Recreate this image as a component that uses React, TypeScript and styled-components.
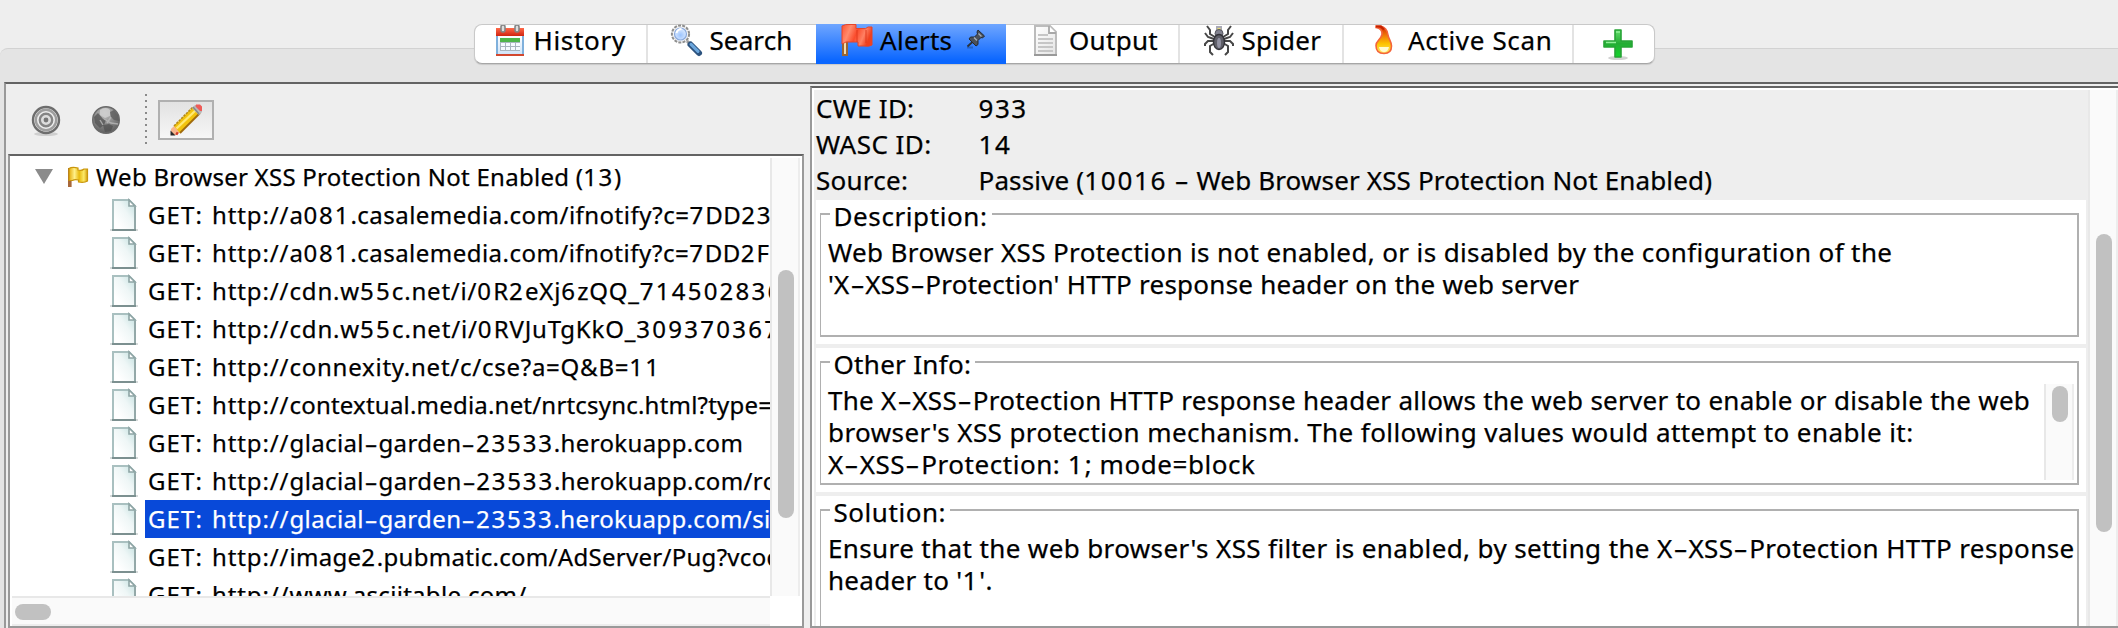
import React from "react";
import styled, { createGlobalStyle } from "styled-components";

const GlobalStyle = createGlobalStyle`
  *, *::before, *::after { box-sizing: border-box; }
  html, body { margin: 0; padding: 0; }
  body {
    background: #eeeeee;
    color: #000;
    font-family: "Noto Sans", "Open Sans", sans-serif;
    -webkit-text-stroke: 0.25px currentColor;
    overflow: hidden;
  }
`;

/* ---------- text ---------- */

const Run = styled.span<{ $track?: number }>`
  letter-spacing: ${(p) => p.$track ?? 0}px;
  white-space: pre;
`;

const Digits = styled.span<{ $track: number }>`
  letter-spacing: calc(${(p) => p.$track}px + 0.06em);
`;

const Hyphen = styled.span`
  display: inline-block;
  padding: 0 0.135em;
  transform: scaleX(1.7);
`;

/* Digits and hyphens are set wider than the surrounding letters. */
function Label({ text, track = 0 }: { text: string; track?: number }) {
  return (
    <Run $track={track}>
      {text.split(/(\d+|-)/).map((part, i) => {
        if (part === "-") return <Hyphen key={i}>-</Hyphen>;
        if (/^\d+$/.test(part)) return <Digits key={i} $track={track}>{part}</Digits>;
        return part;
      })}
    </Run>
  );
}

/* ---------- icons ---------- */

const Icon = styled.svg<{ $w?: number; $h?: number }>`
  display: block;
  flex: none;
  width: ${(p) => p.$w ?? 32}px;
  height: ${(p) => p.$h ?? 32}px;
  overflow: visible;
`;

const CalendarIcon = () => (
  <Icon viewBox="0 0 32 32">
    <defs>
      <linearGradient id="calBody" x1="0" y1="0" x2="0" y2="1">
        <stop offset="0" stopColor="#ffffff" />
        <stop offset="1" stopColor="#cfe3f8" />
      </linearGradient>
      <linearGradient id="calTop" x1="0" y1="0" x2="0" y2="1">
        <stop offset="0" stopColor="#ff6a4a" />
        <stop offset="1" stopColor="#cf2410" />
      </linearGradient>
    </defs>
    <rect x="3" y="11" width="26" height="20" fill="url(#calBody)" stroke="#7fb0dc" strokeWidth="2" />
    <rect x="2" y="30" width="28" height="2" fill="#d2482f" />
    <rect x="2" y="4" width="28" height="8" fill="url(#calTop)" />
    <rect x="6" y="14" width="20" height="4" fill="#4fb64a" />
    <rect x="6" y="18" width="20" height="9" fill="#a9b6bf" />
    {[7, 12, 17, 22].map((x) => (
      <g key={x} fill="#f6fbff">
        <rect x={x} y="19" width="4" height="3" />
        <rect x={x} y="23" width="4" height="3" />
      </g>
    ))}
    <g fill="#ddd" stroke="#858585" strokeWidth="1.6">
      <rect x="7" y="1" width="4" height="7" rx="2" />
      <rect x="21" y="1" width="4" height="7" rx="2" />
    </g>
  </Icon>
);

const SearchIcon = () => (
  <Icon viewBox="0 0 32 32">
    <defs>
      <radialGradient id="lens" cx="0.5" cy="0.6" r="0.6">
        <stop offset="0" stopColor="#9cc4ff" />
        <stop offset="1" stopColor="#e2eeff" />
      </radialGradient>
    </defs>
    <path d="M17 17l4 4" stroke="#9a9a9a" strokeWidth="3" />
    <path d="M20.5 20.5l8.5 8.5" stroke="#2c537f" strokeWidth="6" strokeLinecap="round" />
    <path d="M21 20.4l7 7" stroke="#6ba6dd" strokeWidth="3" strokeLinecap="round" />
    <circle cx="10.5" cy="10" r="8.6" fill="#f4f4f4" stroke="#8f8f8f" strokeWidth="2" strokeDasharray="3 1.2" />
    <circle cx="10.5" cy="10" r="6" fill="url(#lens)" stroke="#8aa9dd" strokeWidth="1.2" />
    <path d="M6.5 9q1-4 5-4" stroke="#fff" strokeWidth="2" fill="none" />
  </Icon>
);

const FlagIcon = () => (
  <Icon viewBox="0 0 32 32">
    <defs>
      <linearGradient id="redFlag" x1="0" y1="0" x2="1" y2="0.3">
        <stop offset="0" stopColor="#ff5230" />
        <stop offset="0.3" stopColor="#ff8b6e" />
        <stop offset="0.55" stopColor="#fb4b2b" />
        <stop offset="0.8" stopColor="#ff8164" />
        <stop offset="1" stopColor="#f0401f" />
      </linearGradient>
    </defs>
    <rect x="4" y="2" width="6" height="30" fill="#996633" />
    <rect x="6" y="14" width="2" height="16" fill="#f3dcae" />
    <path d="M4 2q3-2 8-1.500h6v4h6q4 1 6-1.500h4v18q-3 2-8 1h-6v-4h-8q-4-1-8 2z" fill="url(#redFlag)" stroke="#e5452a" strokeWidth="1" />
    <path d="M19 6v12M28 6v13" stroke="#e03a1e" strokeWidth="1.6" opacity=".6" />
  </Icon>
);

const PinIcon = () => (
  <Icon viewBox="0 0 20 20" $w={20} $h={20}>
    <path d="M1 18.500h6" stroke="#1c4f9e" strokeWidth="2" opacity=".55" />
    <path d="M1.500 17.500l6-5.500" stroke="#2b3138" strokeWidth="1.8" />
    <path d="M12 1l6.500 6-2 2-1.500-.5-3 3v4l-2 1.500-7-7 1.500-2h4l3-3-.5-2z" fill="#4b5159" stroke="#252a31" strokeWidth="1" />
    <path d="M12.500 4.500l3 3M8 8.500l3 3" stroke="#a6adb5" strokeWidth="1.4" />
  </Icon>
);

const OutputIcon = () => (
  <Icon viewBox="0 0 32 32">
    <defs>
      <linearGradient id="pageGrey" x1="0" y1="0" x2="1" y2="1">
        <stop offset="0" stopColor="#ffffff" />
        <stop offset="1" stopColor="#e4e4e4" />
      </linearGradient>
    </defs>
    <path d="M7 2h15l6 6v23H7z" fill="url(#pageGrey)" stroke="#bcbcbc" strokeWidth="2" />
    <path d="M21 2v7h7" fill="#fff" stroke="#a8a8a8" strokeWidth="1.8" />
    <path d="M10 11h10M10 15h15M10 19h15M10 23h15M10 27h15" stroke="#c6c6c6" strokeWidth="1.8" />
    <path d="M6 31h23" stroke="#999" strokeWidth="2" />
  </Icon>
);

const SpiderIcon = () => (
  <Icon viewBox="0 0 32 32">
    <g fill="none" stroke="#474747" strokeWidth="2">
      <path d="M13 13L8 10V6L5 2M12 15L6 13L3 9M12 17H6L3 20V22M13 19L8 22V28L11 31" />
      <path d="M21 13L26 10V6L29 2M22 15L28 13L31 9M22 17H28L31 20V22M21 19L26 22V28L23 31" />
    </g>
    <path d="M14 2h6v4h-6z" fill="#a9a9b5" />
    <rect x="15.500" y="4" width="3" height="3" fill="#e8dd76" />
    <ellipse cx="17" cy="9.500" rx="4" ry="4" fill="#82828f" stroke="#55555c" strokeWidth="1" />
    <ellipse cx="17" cy="18" rx="5.500" ry="7.500" fill="#5f5f68" stroke="#333338" strokeWidth="1.4" />
    <ellipse cx="17" cy="19" rx="2" ry="5" fill="#9292a2" />
  </Icon>
);

const FlameIcon = () => (
  <Icon viewBox="0 0 32 32">
    <defs>
      <linearGradient id="flame" x1="0" y1="0" x2="0" y2="1">
        <stop offset="0" stopColor="#d32300" />
        <stop offset="0.35" stopColor="#f07b08" />
        <stop offset="0.65" stopColor="#fdc400" />
        <stop offset="1" stopColor="#ffe96a" />
      </linearGradient>
    </defs>
    <path d="M10 2h4.500c5 1 7 5 7.500 9c.5 4 3.500 6 3.500 11c0 5-3 7.500-7.500 7.500s-8-2.500-8-8c0-5 5-6 6-11c.4-4-2-6.500-6-7z" fill="url(#flame)" stroke="#f4633a" strokeWidth="1.6" />
    <path d="M13 23h10q-1 5-5 5t-5-5z" fill="#fffbd0" />
    <path d="M10 2.500h5l3 3" fill="none" stroke="#c52200" strokeWidth="2" />
  </Icon>
);

const PlusIcon = () => (
  <Icon viewBox="0 0 32 32">
    <defs>
      <linearGradient id="plus" x1="0" y1="0" x2="0" y2="1">
        <stop offset="0" stopColor="#63dd6a" />
        <stop offset="0.5" stopColor="#24ac34" />
        <stop offset="1" stopColor="#12d52b" />
      </linearGradient>
    </defs>
    <ellipse cx="16" cy="30" rx="10" ry="2" fill="#d2d2d2" />
    <path d="M13 2h6v11h11v6H19v10h-6V19H2v-6h11z" fill="url(#plus)" stroke="#27a436" strokeWidth="1.6" strokeLinejoin="round" />
    <path d="M14 4h4M4 14.500h10" stroke="#8ff096" strokeWidth="1.4" />
  </Icon>
);

const TargetIcon = () => (
  <Icon viewBox="0 0 32 32">
    <ellipse cx="16" cy="30" rx="12" ry="2" fill="#cfcfcf" />
    <circle cx="16" cy="16" r="13" fill="#ededed" stroke="#6d6d6d" strokeWidth="2.400" />
    <circle cx="16" cy="16" r="10.200" fill="none" stroke="#9e9e9e" strokeWidth="2.400" />
    <circle cx="16" cy="16" r="6.200" fill="#ddd" stroke="#858585" strokeWidth="2.400" />
    <circle cx="16" cy="16" r="2.400" fill="#777" />
  </Icon>
);

const GlobeIcon = () => (
  <Icon viewBox="0 0 32 32">
    <defs>
      <radialGradient id="globe" cx="0.45" cy="0.25" r="0.8">
        <stop offset="0" stopColor="#c4c4c4" />
        <stop offset="0.5" stopColor="#8a8a8a" />
        <stop offset="1" stopColor="#585858" />
      </radialGradient>
    </defs>
    <circle cx="16" cy="16" r="13.300" fill="url(#globe)" stroke="#6a6a6a" strokeWidth="1.400" />
    <path d="M4 13l4-4 5 6 3 1-2 5-4 3-5-5z" fill="#565656" opacity=".8" />
    <path d="M20 8l4-2 4 5 1 6-5-1-3-3z" fill="#595959" opacity=".75" />
    <path d="M13 21l6-1 4 2-2 5-6 1z" fill="#4f4f4f" opacity=".7" />
    <path d="M10 6q6-4 10 0l0 6-5 2-5-3z" fill="#cfcfcf" opacity=".85" />
    <path d="M14 15l7 4 7 1M10 16l3 5M21 13l-4 6" stroke="#b9b9b9" strokeWidth="1.400" fill="none" opacity=".8" />
  </Icon>
);

const PencilIcon = () => (
  <Icon viewBox="0 0 32 32">
    <path d="M1 31V25L5 21L11 27L7 31Z" fill="#f6b58d" />
    <path d="M0.500 31.500v-5l5 5z" fill="#2a2a2a" />
    <path d="M4 22L23 3l7 6L10 29z" fill="#f2c30d" />
    <path d="M4 22L23 3" stroke="#b48b1b" strokeWidth="1.600" strokeDasharray="2.400 1" />
    <path d="M6.500 24.500L26 6" stroke="#ffe974" strokeWidth="2.400" />
    <path d="M10 29L30 9" stroke="#a06a0c" strokeWidth="1.800" />
    <path d="M22 4l3-3h3l4 4v3l-3 3z" fill="#b9b9b9" />
    <path d="M26 0.500h4l2 2V7l-2 0-4.500-4.500z" fill="#ee5b57" />
    <path d="M23 3l6 7" stroke="#888" strokeWidth="1.500" />
    <path d="M6 29l2 1" stroke="#cf3c2c" strokeWidth="3" />
  </Icon>
);

const YellowFlagIcon = () => (
  <Icon viewBox="0 0 20 20" $w={20} $h={20}>
    <defs>
      <linearGradient id="yellowFlag" x1="0" y1="0" x2="1" y2="0">
        <stop offset="0" stopColor="#e5ac0a" />
        <stop offset="0.3" stopColor="#fff08a" />
        <stop offset="0.55" stopColor="#e8b90c" />
        <stop offset="0.8" stopColor="#fdea68" />
        <stop offset="1" stopColor="#d49d08" />
      </linearGradient>
    </defs>
    <rect x="0" y="1" width="3.600" height="19" fill="#a8683a" />
    <path d="M1 1.500q3-2 9-.5v2q4 1 6-1h3.500v12q-3 2-9 1v-2q-4-1-6 .5H1z" fill="url(#yellowFlag)" stroke="#c9960c" strokeWidth="1.200" />
  </Icon>
);

const PageIcon = () => (
  <Icon viewBox="0 0 28 32" $w={28} $h={32}>
    <defs>
      <linearGradient id="page" x1="1" y1="0" x2="0.200" y2="0.800">
        <stop offset="0" stopColor="#bfdedd" />
        <stop offset="0.5" stopColor="#eef6f6" />
        <stop offset="1" stopColor="#ffffff" />
      </linearGradient>
    </defs>
    <path d="M0 31h28" stroke="#d5dada" strokeWidth="2" />
    <path d="M3 1h16l6 6v24H3z" fill="url(#page)" stroke="#a9c0c0" strokeWidth="2" />
    <path d="M19 1v6h6z" fill="#fff" stroke="#8ea5a5" strokeWidth="1.600" />
    <path d="M25 8v22" stroke="#8fa3a3" strokeWidth="1.600" />
    <path d="M2 31h24" stroke="#7c9090" strokeWidth="2" />
  </Icon>
);

/* ---------- tabs ---------- */

const Window = styled.div`
  display: flex;
  flex-direction: column;
  width: 2118px;
  height: 628px;
  overflow: hidden;
  background: #eeeeee;
`;

const TabBar = styled.nav`
  position: relative;
  z-index: 1;
  display: flex;
  flex: none;
  width: 1181px;
  height: 40px;
  margin: 24px 0 0 474px;
  background: #fff;
  border: 1px solid #c9c9c9;
  border-bottom-color: #a6a6a6;
  border-radius: 8px;
  box-shadow: 0 1px 1px rgba(0, 0, 0, 0.12);
  font-size: 26px;
  line-height: 30px;
`;

const Tab = styled.div<{ $width: number; $pad?: number; $gap?: number; $active?: boolean; $rule?: boolean }>`
  display: flex;
  flex: none;
  align-items: flex-start;
  gap: ${(p) => p.$gap ?? 8}px;
  width: ${(p) => p.$width}px;
  margin: -1px 0;
  padding: 0 0 0 ${(p) => p.$pad ?? 22}px;
  background: ${(p) => (p.$active ? "linear-gradient(#6fa6ff, #0a66ff 92%)" : "none")};
  ${(p) => p.$rule && "box-shadow: inset -2px 0 #e3e3e3;"}
  clip-path: ${(p) => (p.$rule ? "inset(1px 0)" : "none")};

  & > span { margin-top: 1px; }
`;

const PinSlot = styled.div`
  padding: 5px 0 0 4px;
`;

const AddSlot = styled.div`
  padding-top: 4px;
`;

/* ---------- frames ---------- */

const Body = styled.div`
  display: flex;
  flex: 1;
  min-height: 0;
  margin-top: -16px;
  padding: 33px 0 0 4px;
  background: #e4e4e4;
  border-top: 1px solid #d2d2d2;
  border-top-left-radius: 8px;
`;

const Workspace = styled.div`
  display: flex;
  gap: 6px;
  flex: 1;
  min-width: 0;
  background: #eeeeee;
  border-top: 2px solid #636363;
  border-left: 2px solid #999;
`;

const Sidebar = styled.section`
  display: flex;
  flex-direction: column;
  flex: none;
  width: 798px;
`;

const Toolbar = styled.div`
  display: flex;
  align-items: center;
  flex: none;
  height: 70px;
  padding: 2px 0 0 24px;
  gap: 28px;
`;

const Divider = styled.div`
  width: 2px;
  height: 50px;
  margin: -2px -17px 0 -5px;
  background: repeating-linear-gradient(#8a8a8a 0 2px, transparent 2px 6px);
`;

const ToggleButton = styled.div`
  display: flex;
  justify-content: center;
  align-items: center;
  width: 56px;
  height: 40px;
  border: 2px solid #b0b0b0;
  background: linear-gradient(#e2e2e2, #f6f6f6);
`;

const TreeFrame = styled.div`
  display: grid;
  grid-template: 1fr 30px / 1fr 30px;
  flex: 1;
  min-height: 0;
  margin-left: 2px;
  padding: 2px 2px 0;
  background: #fff;
  border: 2px solid #999;
  border-top-color: #636363;
`;

const Tree = styled.div`
  min-height: 0;
  min-width: 0;
  overflow: hidden;
  font-size: 24px;
  line-height: 38px;
`;

const GroupRow = styled.div`
  display: flex;
  align-items: center;
  height: 38px;
  padding-left: 23px;
`;

const Expander = styled.div`
  width: 18px;
  height: 15px;
  margin: -1px 15px 0 0;
  background: #8b8b8b;
  clip-path: polygon(0 0, 100% 0, 50% 100%);
`;

const GroupName = styled.div`
  margin-left: 8px;
`;

const AlertRow = styled.div`
  display: flex;
  align-items: center;
  height: 38px;
  padding-left: 98px;
`;

const Request = styled.div<{ $selected?: boolean }>`
  display: flex;
  flex: 1;
  height: 38px;
  margin-left: 7px;
  padding-left: 3px;
  color: ${(p) => (p.$selected ? "#fff" : "#000")};
  background: ${(p) => (p.$selected ? "#0849d9" : "none")};
`;

const Method = styled.div`
  flex: none;
  width: 64px;
`;

const Scheme = styled.div`
  flex: none;
  width: 77.500px;
`;

const VScroll = styled.div<{ $top: number }>`
  flex: none;
  width: 30px;
  padding: ${(p) => p.$top}px 0 0 6px;
  background: #fafafa;
  border-left: 2px solid #e8e8e8;
  border-right: 2px solid #ededed;
`;

const HScroll = styled.div`
  padding: 6px 0 0 3px;
  background: #fafafa;
  border-top: 2px solid #e8e8e8;
  border-bottom: 2px solid #ededed;
`;

const Thumb = styled.div<{ $w?: number; $h?: number }>`
  width: ${(p) => p.$w ?? 16}px;
  height: ${(p) => p.$h ?? 16}px;
  border-radius: 8px;
  background: #c1c1c1;
`;

/* ---------- details ---------- */

const DetailFrame = styled.section`
  display: flex;
  flex: 1;
  min-width: 0;
  margin-top: 2px;
  padding: 2px 0 0 2px;
  background: #fff;
  border: 2px solid #999;
  border-top-color: #636363;
  border-right: 0;
  font-size: 26px;
`;

const Details = styled.div`
  display: flex;
  flex-direction: column;
  flex: 1;
  gap: 4px;
  min-width: 0;
  padding: 0 2px;
  overflow: hidden;
  background: #eeeeee;
`;

const Facts = styled.dl`
  display: grid;
  grid-template-columns: 162.500px 1fr;
  grid-auto-rows: 36px;
  flex: none;
  height: 106px;
  margin: 0;
  line-height: 36px;

  dt, dd { margin: 0; }
`;

const Card = styled.div<{ $last?: boolean }>`
  flex: none;
  height: ${(p) => (p.$last ? 200 : 144)}px;
  padding: 13px 7px 7px 4px;
  background: #fff;
`;

const Outline = styled.div`
  height: 100%;
  border: 2px solid #b0b0b0;
  border-left-width: 1px;
  line-height: 32px;
`;

const CardTitle = styled.div`
  width: fit-content;
  margin: -15px 0 0 9px;
  padding: 0 4px 0 3.500px;
  background: #fff;
`;

const CardBody = styled.div`
  display: flex;
  justify-content: space-between;
  margin-top: 4px;
  padding: 0 3px 0 7px;
`;

const Lines = styled.div`
  display: flex;
  flex-direction: column;
`;

const InnerScroll = styled.div`
  display: flex;
  height: 96px;
`;

type Line = [text: string, track: number];

const requests: Line[] = [
  ["a081.casalemedia.com/ifnotify?c=7DD23", 0.48],
  ["a081.casalemedia.com/ifnotify?c=7DD2F", 0.47],
  ["cdn.w55c.net/i/0R2eXj6zQQ_714502836", 0.8],
  ["cdn.w55c.net/i/0RVJuTgKkO_309370367", 0.83],
  ["connexity.net/c/cse?a=Q&B=11", 0.75],
  ["contextual.media.net/nrtcsync.html?type=", 0.2],
  ["glacial-garden-23533.herokuapp.com", 0.37],
  ["glacial-garden-23533.herokuapp.com/ro", 0.38],
  ["glacial-garden-23533.herokuapp.com/si", 0.36],
  ["image2.pubmatic.com/AdServer/Pug?vcod", 0.29],
  ["www.asciitable.com/", 0.3],
];

const selectedRequest = 8;

const facts: { name: Line; value: Line }[] = [
  { name: ["CWE ID:", 0.25], value: ["933", 0] },
  { name: ["WASC ID:", 0.45], value: ["14", 0] },
  { name: ["Source:", 0.25], value: ["Passive (10016 - Web Browser XSS Protection Not Enabled)", 0.15] },
];

const cards: { title: Line; lines: Line[]; scroll?: boolean }[] = [
  {
    title: ["Description:", 0.6],
    lines: [
      ["Web Browser XSS Protection is not enabled, or is disabled by the configuration of the", 0.375],
      ["'X-XSS-Protection' HTTP response header on the web server", 0.24],
    ],
  },
  {
    title: ["Other Info:", 0.3],
    scroll: true,
    lines: [
      ["The X-XSS-Protection HTTP response header allows the web server to enable or disable the web", 0.29],
      ["browser's XSS protection mechanism. The following values would attempt to enable it:", 0.42],
      ["X-XSS-Protection: 1; mode=block", 0.56],
    ],
  },
  {
    title: ["Solution:", 0.55],
    lines: [
      ["Ensure that the web browser's XSS filter is enabled, by setting the X-XSS-Protection HTTP response", 0.38],
      ["header to '1'.", 0.3],
    ],
  },
];

export default function App() {
  return (
    <Window>
      <GlobalStyle />
      <TabBar>
        <Tab $width={173} $pad={19} $gap={7.5} $rule><CalendarIcon /><Label text="History" track={0.7} /></Tab>
        <Tab $width={168} $gap={7.5}><SearchIcon /><Label text="Search" track={0.1} /></Tab>
        <Tab $width={190} $gap={10} $active>
          <FlagIcon />
          <Label text="Alerts" track={0.3} />
          <PinSlot><PinIcon /></PinSlot>
        </Tab>
        <Tab $width={174} $gap={9} $rule><OutputIcon /><Label text="Output" track={0.3} /></Tab>
        <Tab $width={164} $gap={7.5} $rule><SpiderIcon /><Label text="Spider" track={0.2} /></Tab>
        <Tab $width={230} $gap={10} $rule><FlameIcon /><Label text="Active Scan" track={0.66} /></Tab>
        <Tab $width={80} $pad={28}><AddSlot><PlusIcon /></AddSlot></Tab>
      </TabBar>

      <Body>
        <Workspace>
          <Sidebar>
            <Toolbar>
              <TargetIcon />
              <GlobeIcon />
              <Divider />
              <ToggleButton><PencilIcon /></ToggleButton>
            </Toolbar>
            <TreeFrame>
              <Tree>
                <GroupRow>
                  <Expander />
                  <YellowFlagIcon />
                  <GroupName><Label text="Web Browser XSS Protection Not Enabled (13)" track={0.26} /></GroupName>
                </GroupRow>
                {requests.map(([url, track], i) => (
                  <AlertRow key={url}>
                    <PageIcon />
                    <Request $selected={i === selectedRequest}>
                      <Method><Label text="GET:" track={1.1} /></Method>
                      <Scheme><Label text="http://" track={0.87} /></Scheme>
                      <Label text={url} track={track} />
                    </Request>
                  </AlertRow>
                ))}
              </Tree>
              <VScroll $top={112}><Thumb $h={248} /></VScroll>
              <HScroll><Thumb $w={36} /></HScroll>
            </TreeFrame>
          </Sidebar>

          <DetailFrame>
            <Details>
              <Facts>
                {facts.map(({ name, value }) => (
                  <React.Fragment key={name[0]}>
                    <dt><Label text={name[0]} track={name[1]} /></dt>
                    <dd><Label text={value[0]} track={value[1]} /></dd>
                  </React.Fragment>
                ))}
              </Facts>
              {cards.map(({ title, lines, scroll }, i) => (
                <Card key={title[0]} $last={i === cards.length - 1}>
                  <Outline>
                    <CardTitle><Label text={title[0]} track={title[1]} /></CardTitle>
                    <CardBody>
                      <Lines>
                        {lines.map(([text, track]) => <Label key={text} text={text} track={track} />)}
                      </Lines>
                      {scroll && <InnerScroll><VScroll $top={2}><Thumb $h={36} /></VScroll></InnerScroll>}
                    </CardBody>
                  </Outline>
                </Card>
              ))}
            </Details>
            <VScroll $top={144}><Thumb $h={298} /></VScroll>
          </DetailFrame>
        </Workspace>
      </Body>
    </Window>
  );
}
